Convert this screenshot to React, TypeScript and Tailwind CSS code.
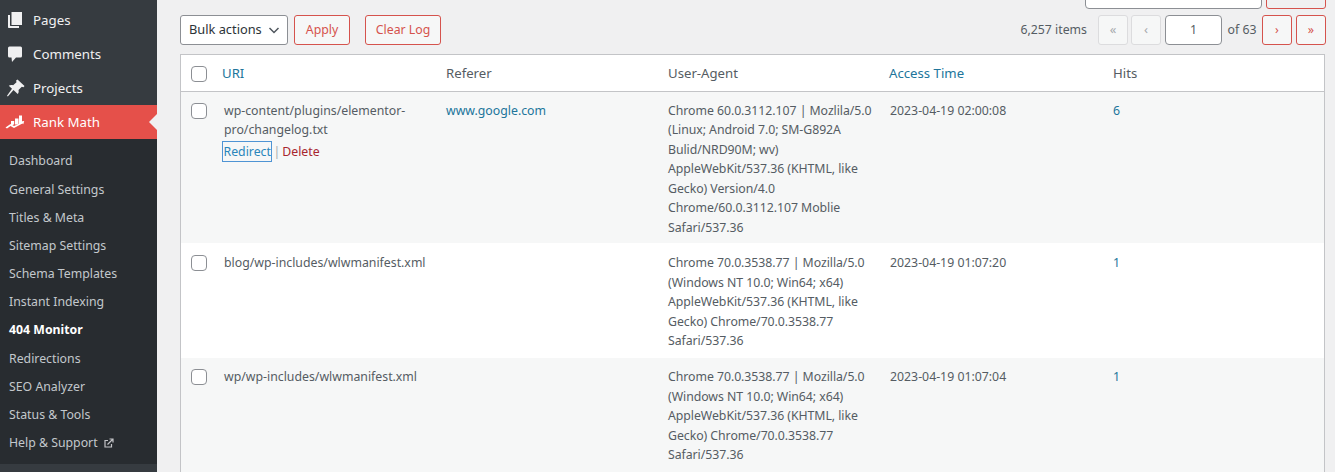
import React from "react";

const subs = ["Dashboard","General Settings","Titles & Meta","Sitemap Settings","Schema Templates","Instant Indexing","404 Monitor","Redirections","SEO Analyzer","Status & Tools","Help & Support"];

function Check() {
  return <span className="block w-4 h-4 rounded-[4px] border border-[#8c8f94] bg-white" />;
}

function PagesIcon() {
  return (
    <svg width="20" height="20" viewBox="0 0 20 20" fill="#f0f0f1">
      <path d="M6.500 2H17v13H6.500z" />
      <path d="M3 5h2v10.500c0 .3.200.5.500.5H14v2H3.800A.8.8 0 0 1 3 17.200z" />
    </svg>
  );
}
function CommentIcon() {
  return (
    <svg width="20" height="20" viewBox="0 0 20 20" fill="#f0f0f1">
      <path d="M4.500 2.500h11A1.500 1.500 0 0 1 17 4v8a1.500 1.500 0 0 1-1.500 1.500H11L7 18l-.5-4.500h-2A1.500 1.500 0 0 1 3 12V4a1.500 1.500 0 0 1 1.500-1.500z" />
    </svg>
  );
}
function PinIcon() {
  return (
    <svg width="20" height="20" viewBox="0 0 20 20" fill="#f0f0f1">
      <path d="M12.500 1.500l7 6.500-1 1.300-1.700-.6-3.300 3.400c.5 1.700.1 3-.8 4L8.500 12 2.800 18.500 2 17.800 7 10.800 3.800 7.800c1.200-1 2.900-1.200 4.300-.5L11.500 4.300l-.4-1.700z" />
    </svg>
  );
}
function RankIcon() {
  return (
    <svg width="20" height="20" viewBox="0 0 20 20" fill="#fff">
      <path d="M6 9h3.200v3.200L6 14zM10 6.500h3.500v6L10 12.500zM14 3.500h3v8l-3 1z" />
      <path d="M0.500 15.500l5-3.500 3.500 2 7.500-3.500-1-1 3.700-.6-.9 3.400-.9-.9L9 16l-3.500-2-3.500 2.500z" />
    </svg>
  );
}
function ExtIcon() {
  return (
    <svg width="10" height="10" viewBox="0 0 10 10" fill="none" stroke="#c3c4c7" strokeWidth="1.200" className="ml-[6px] inline-block">
      <path d="M7.500 6v3H1V2.500h3" />
      <path d="M3.500 6.500L8.500 1.500M5.500 1h3.500v3.500" />
    </svg>
  );
}

const mainMenu = [
  { label: "Pages", icon: <PagesIcon /> },
  { label: "Comments", icon: <CommentIcon /> },
  { label: "Projects", icon: <PinIcon /> },
];

function Sidebar() {
  return (
    <aside className="w-[157px] shrink-0 h-[472px] overflow-hidden bg-[#363b40] pt-[3px] text-[13.300px]">
      {mainMenu.map((m) => (
        <div key={m.label} className="h-[34px] flex items-center text-[#f0f0f1]">
          <span className="w-[33px] pl-[5px] flex">{m.icon}</span>
          <span className="mt-[1px]">{m.label}</span>
        </div>
      ))}
      <div className="relative h-[34px] flex items-center bg-[#e5504a] text-white">
        <span className="w-[33px] pl-[5px] flex"><RankIcon /></span>
        <span className="mt-[1px]">Rank Math</span>
        <span className="absolute right-0 top-[9px] border-y-[8px] border-y-transparent border-r-[8px] border-r-[#f0f0f1]" />
      </div>
      <div className="bg-[#282c30] h-[325px] pt-[8px]">
        {subs.map((s) => (
          <div key={s} className={`h-[28.200px] pl-[9px] flex items-center text-[12.300px] ${s === "404 Monitor" ? "font-bold text-white" : "text-[#c3c8cc]"}`}>
            {s}
            {s.startsWith("Help") && <ExtIcon />}
          </div>
        ))}
      </div>
    </aside>
  );
}

function Btn({ children, className = "" }: { children: React.ReactNode; className?: string }) {
  return (
    <span className={`h-[30px] flex items-center justify-center rounded-[3px] border border-[#d5534d] text-[#d5534d] bg-[#f6f7f7] text-[12.300px] ${className}`}>
      {children}
    </span>
  );
}
function Disabled({ children }: { children: React.ReactNode }) {
  return <span className="w-[30px] h-[30px] flex items-center justify-center rounded-[3px] border border-[#dcdcde] bg-[#f6f7f7] text-[#a7aaad] text-[13px]">{children}</span>;
}

const rows = [
  {
    uri: ["wp-content/plugins/elementor-", "pro/changelog.txt"],
    ref: "www.google.com",
    ua: ["Chrome 60.0.3112.107 | Mozlila/5.0", "(Linux; Android 7.0; SM-G892A", "Bulid/NRD90M; wv)", "AppleWebKit/537.36 (KHTML, like", "Gecko) Version/4.0", "Chrome/60.0.3112.107 Moblie", "Safari/537.36"],
    time: "2023-04-19 02:00:08", hits: "6", actions: true, bg: "bg-[#f6f7f7]", h: "h-[151px]", pt: "pt-[8.600px]", cb: "pt-[2.400px]",
  },
  {
    uri: ["blog/wp-includes/wlwmanifest.xml"], ref: "",
    ua: ["Chrome 70.0.3538.77 | Mozilla/5.0", "(Windows NT 10.0; Win64; x64)", "AppleWebKit/537.36 (KHTML, like", "Gecko) Chrome/70.0.3538.77", "Safari/537.36"],
    time: "2023-04-19 01:07:20", hits: "1", actions: false, bg: "bg-white", h: "h-[115px]", pt: "pt-[10px]", cb: "pt-[2px]",
  },
  {
    uri: ["wp/wp-includes/wlwmanifest.xml"], ref: "",
    ua: ["Chrome 70.0.3538.77 | Mozilla/5.0", "(Windows NT 10.0; Win64; x64)", "AppleWebKit/537.36 (KHTML, like", "Gecko) Chrome/70.0.3538.77", "Safari/537.36"],
    time: "2023-04-19 01:07:04", hits: "1", actions: false, bg: "bg-[#f6f7f7]", h: "h-[115px]", pt: "pt-[9px]", cb: "pt-[2px]",
  },
];

const cols = "grid grid-cols-[43px_222px_222px_222px_223px_1fr]";

export default function App() {
  return (
    <div className="w-[1335px] h-[472px] overflow-hidden flex bg-[#f0f0f1] leading-[19.500px] text-[#555c63] [font-family:'Noto_Sans',sans-serif]">
      <Sidebar />
      <main className="flex-1 min-w-0 pl-[23px] pr-[10px]">
        <div className="flex justify-end -mt-[21px] h-[30px] gap-[4px] mr-[-1px]">
          <span className="w-[177px] h-[30px] rounded-[4px] border border-[#8c8f94] bg-white" />
          <span className="w-[60px] h-[30px] rounded-[3px] border border-[#d5534d]" />
        </div>
        <div className="flex items-center h-[30px] mt-[6px] mr-[-1px]">
          <span className="w-[108px] h-[30px] flex items-center justify-between pl-[8px] pr-[7px] bg-white border border-[#8c8f94] rounded-[3px] text-[12.800px] text-[#2c3338]">
            Bulk actions
            <svg width="12" height="12" viewBox="0 0 12 12" fill="none" stroke="#50575e" strokeWidth="1.500"><path d="M1.500 4l4.500 4.500L10.500 4" /></svg>
          </span>
          <Btn className="w-[56px] ml-[6px]">Apply</Btn>
          <Btn className="w-[76px] ml-[15px]">Clear Log</Btn>
          <span className="ml-auto text-[12.300px] mr-[11px]">6,257 items</span>
          <div className="flex items-center">
            <Disabled>«</Disabled>
            <span className="ml-[3px]"><Disabled>‹</Disabled></span>
            <span className="ml-[4px] w-[57px] h-[30px] flex items-center justify-center bg-white border border-[#8c8f94] rounded-[4px] text-[12.300px]">1</span>
            <span className="text-[12.300px] w-[40px] text-center">of 63</span>
            <Btn className="w-[30px]">›</Btn>
            <Btn className="w-[30px] ml-[4px]">»</Btn>
          </div>
        </div>
        <div className="mt-[9px] border border-[#c3c4c7] bg-white text-[13.200px]">
          <div className={`${cols} h-[37px] pt-[1px] items-center border-b border-[#c3c4c7] bg-white`}>
            <span className="pl-[10px]"><Check /></span>
            <span className="text-[#21759b] -ml-[2px]">URI</span>
            <span>Referer</span>
            <span>User-Agent</span>
            <span className="text-[#21759b] -ml-[1px]">Access Time</span>
            <span>Hits</span>
          </div>
          {rows.map((r, i) => (
            <div key={i} className={`${cols} ${r.h} ${r.bg} ${r.pt} text-[12.300px]`}>
              <span className={`pl-[10px] ${r.cb}`}><Check /></span>
              <div>
                {r.uri.map((u) => <div key={u}>{u}</div>)}
                {r.actions && (
                  <div className="mt-[2px] flex items-center">
                    <span className="outline outline-1 outline-[#4f94d4] text-[#2a86bb] -ml-[1px] px-[0.500px]">Redirect</span>
                    <span className="mx-[2px] text-[#a7aaad]">|</span>
                    <span className="text-[#a8262e]">Delete</span>
                  </div>
                )}
              </div>
              <div className="text-[#21759b]">{r.ref}</div>
              <div className="tracking-[-0.050px]">{r.ua.map((u) => <div key={u}>{u}</div>)}</div>
              <div>{r.time}</div>
              <div className="text-[#21759b]">{r.hits}</div>
            </div>
          ))}
        </div>
      </main>
    </div>
  );
}
